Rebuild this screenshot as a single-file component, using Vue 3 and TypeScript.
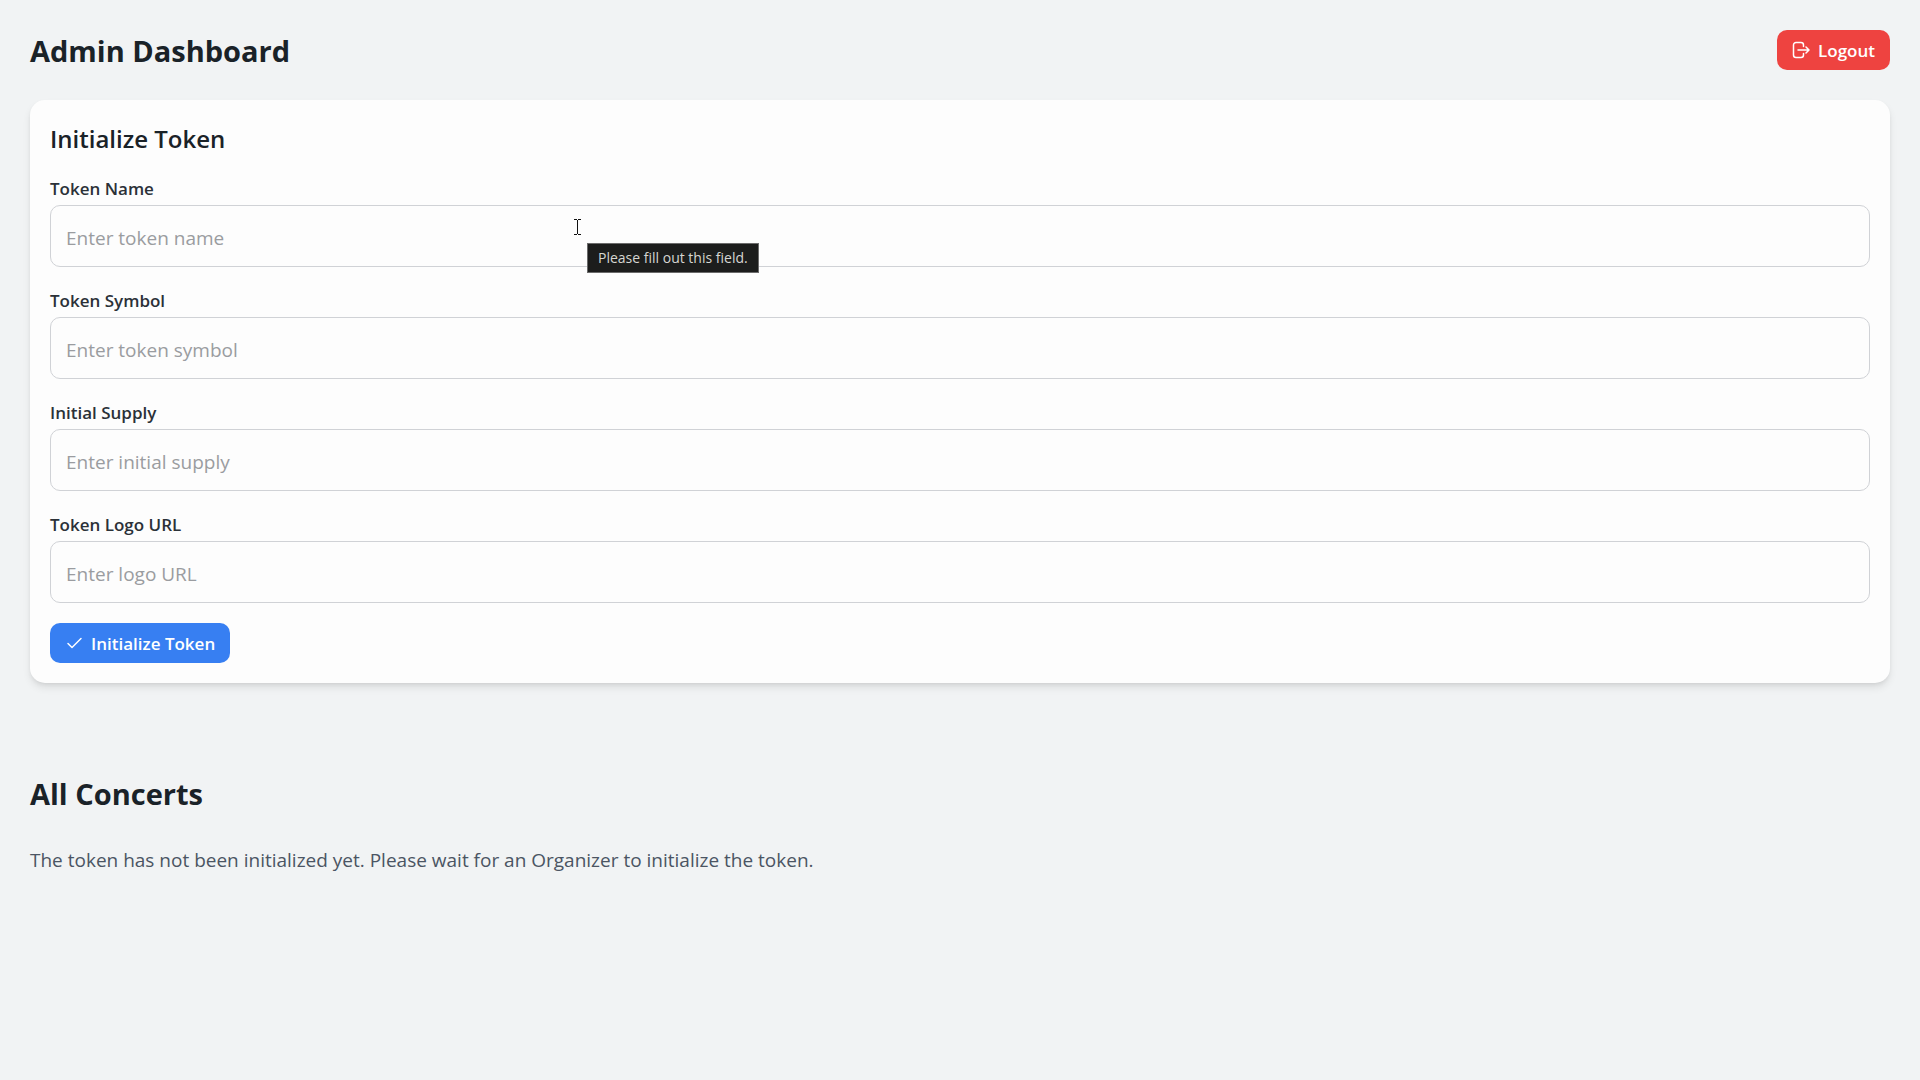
<script setup lang="ts">
import { reactive } from 'vue'

interface Field {
  id: 'name' | 'symbol' | 'supply' | 'logo'
  label: string
  placeholder: string
  hint?: string
}

const fields: Field[] = [
  { id: 'name', label: 'Token Name', placeholder: 'Enter token name', hint: 'Please fill out this field.' },
  { id: 'symbol', label: 'Token Symbol', placeholder: 'Enter token symbol' },
  { id: 'supply', label: 'Initial Supply', placeholder: 'Enter initial supply' },
  { id: 'logo', label: 'Token Logo URL', placeholder: 'Enter logo URL' },
]

const form = reactive({ name: '', symbol: '', supply: '', logo: '' })
</script>

<template>
  <div class="page">
    <header class="topbar">
      <h1 class="title">Admin Dashboard</h1>
      <button type="button" class="btn btn-danger">
        <svg class="icon" viewBox="0 0 18 18" aria-hidden="true">
          <path d="M11.500 5.500V4a2.500 2.500 0 0 0-2.500-2.500H4A2.500 2.500 0 0 0 1.500 4v10A2.500 2.500 0 0 0 4 16.500h5a2.500 2.500 0 0 0 2.500-2.500v-1.500" />
          <path d="M6 9h11M14 6l3 3-3 3" />
        </svg>
        <span class="btn-text">Logout</span>
      </button>
    </header>

    <main>
      <section class="card">
        <h2 class="card-title">Initialize Token</h2>
        <form class="form" @submit.prevent>
          <div v-for="f in fields" :key="f.id" class="field">
            <label class="label" :for="f.id">{{ f.label }}</label>
            <input :id="f.id" v-model="form[f.id]" class="input" type="text" :placeholder="f.placeholder" required />
            <template v-if="f.hint">
              <svg class="caret" viewBox="0 0 7 16" aria-hidden="true">
                <path d="M0 .5h3M4 .5h3M3.500 1v14M0 15.500h3M4 15.500h3" />
              </svg>
              <div class="tooltip" role="tooltip">{{ f.hint }}</div>
            </template>
          </div>
          <button type="submit" class="btn btn-primary">
            <svg class="icon" viewBox="0 0 18 18" aria-hidden="true">
              <path d="M3 9.500l4 4L16 4.500" />
            </svg>
            <span class="btn-text">Initialize Token</span>
          </button>
        </form>
      </section>

      <section class="concerts">
        <h2 class="title">All Concerts</h2>
        <p class="message">The token has not been initialized yet. Please wait for an Organizer to initialize the token.</p>
      </section>
    </main>
  </div>
</template>

<style>
body {
  background: #f1f3f4;
}
</style>

<style scoped>
.page {
  padding: 30px;
  font-family: "Open Sans", "Noto Sans", sans-serif;
  font-size: 19px;
  line-height: 30px;
  color: #1f2937;
}

.topbar {
  display: flex;
  align-items: center;
  justify-content: space-between;
  margin-bottom: 30px;
}

.title {
  margin: 0;
  padding-top: 2px;
  font-size: 29px;
  line-height: 38px;
  font-weight: 700;
  color: #1a2228;
}

.btn {
  display: inline-flex;
  align-items: center;
  gap: 8px;
  height: 40px;
  padding: 0 15px;
  border: 0;
  border-radius: 10px;
  font-family: inherit;
  font-size: 17px;
  line-height: 24px;
  font-weight: 600;
  color: #fff;
  cursor: pointer;
}

.btn-text {
  padding-top: 2px;
}

.btn-danger {
  background: #ee4340;
}

.btn-primary {
  align-self: flex-start;
  background: #377ff2;
}

.icon {
  width: 18px;
  height: 18px;
  fill: none;
  stroke: currentColor;
  stroke-width: 1.5;
  stroke-linecap: round;
  stroke-linejoin: round;
}

.card {
  padding: 20px;
  border-radius: 15px;
  background: #fdfdfd;
  box-shadow: 0 5px 8px -1px rgba(0, 0, 0, 0.1), 0 2px 5px -2px rgba(0, 0, 0, 0.1);
}

.card-title {
  margin: 0 0 20px;
  padding-top: 2px;
  font-size: 24px;
  line-height: 33px;
  font-weight: 600;
  color: #1a2228;
}

.form {
  display: flex;
  flex-direction: column;
  gap: 20px;
}

.field {
  position: relative;
  display: flex;
  flex-direction: column;
  gap: 5px;
}

.label {
  padding-top: 2px;
  font-size: 17px;
  line-height: 23px;
  font-weight: 600;
  color: #2b3138;
}

.input {
  box-sizing: border-box;
  width: 100%;
  height: 62px;
  padding: 4px 15px 0;
  border: 1px solid #d0d2d6;
  border-radius: 10px;
  background: transparent;
  font-family: inherit;
  font-size: 19px;
  color: #1f2937;
  outline: none;
}

.input::placeholder {
  color: #9a9ca0;
  opacity: 1;
}

.caret {
  position: absolute;
  top: 44px;
  left: 524px;
  width: 7px;
  height: 16px;
  fill: none;
  stroke: #111;
}

.tooltip {
  position: absolute;
  z-index: 1;
  top: 68px;
  left: 537px;
  padding: 1px 10px 2px;
  border: 1px solid #6b6b6b;
  background: #1c1d1c;
  font-size: 14px;
  line-height: 25px;
  white-space: nowrap;
  color: #d6d6d2;
}

.concerts {
  margin-top: 90px;
}

.message {
  margin: 30px 0 0;
  padding-top: 2px;
  color: #4b5563;
}
</style>
